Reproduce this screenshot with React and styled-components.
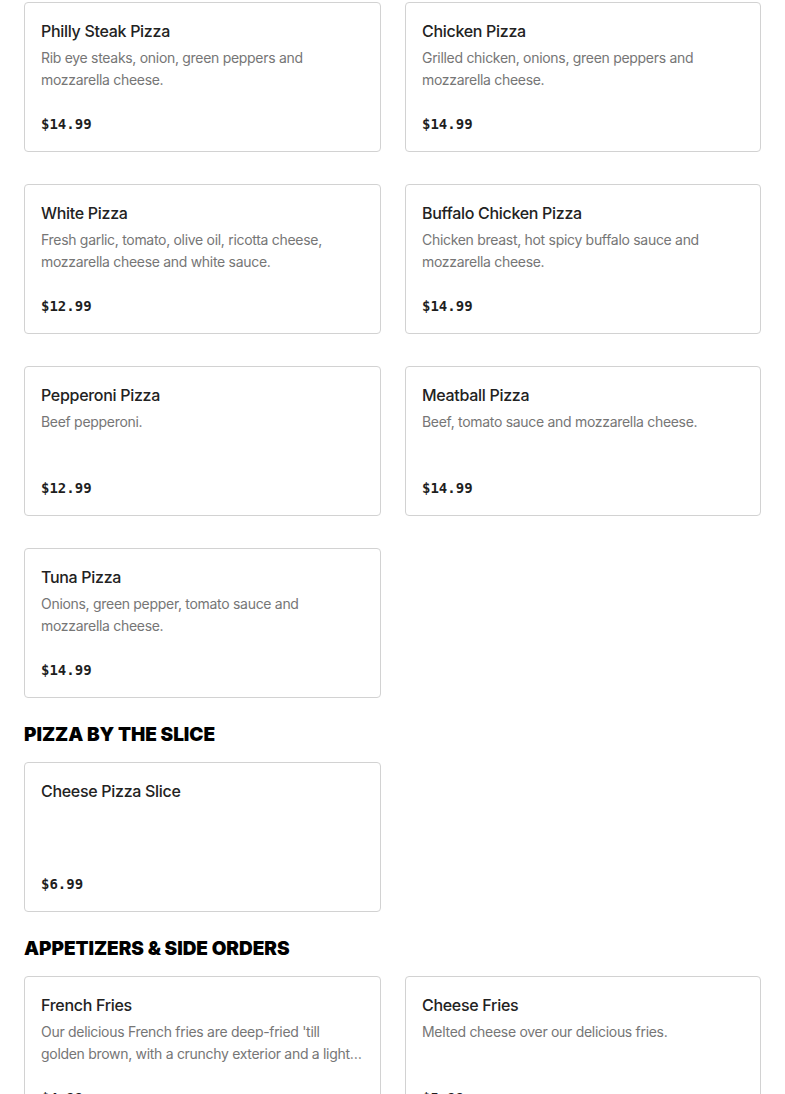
import styled, { createGlobalStyle } from "styled-components"

const Global = createGlobalStyle`
    body {
        margin: 0;
        background: #fff;
        font-family: Inter, "Noto Sans", sans-serif;
    }
`

const Page = styled.div`
    padding: 2px 24px 0 24px;
    display: flex;
    flex-direction: column;
`

const Grid = styled.div`
    display: grid;
    grid-template-columns: 357px 356px;
    column-gap: 24px;
    row-gap: 32px;
`

const Heading = styled.h2`
    margin: 25px 0 15px;
    font-family: Inter, "Liberation Sans", sans-serif;
    font-weight: 900;
    font-size: 19px;
    line-height: 24px;
    color: #000;
    letter-spacing: -0.05px;
`

const Card = styled.div`
    box-sizing: border-box;
    height: 150px;
    border: 1px solid #d2d2d2;
    border-radius: 4px;
    padding: 16px 16px 17px;
    display: flex;
    flex-direction: column;
    background: #fff;

    h3 {
        margin: 0;
        font-size: 16px;
        font-weight: 500;
        line-height: 24px;
        color: #222;
        letter-spacing: -0.3px;
    }

    p {
        margin: 4px 0 0;
        font-size: 14px;
        line-height: 22px;
        color: #767676;
        letter-spacing: -0.3px;
        display: -webkit-box;
        -webkit-line-clamp: 2;
        -webkit-box-orient: vertical;
        overflow: hidden;
    }
`

const Price = styled.div`
    margin-top: auto;
    font-family: "DejaVu Sans Mono", "Liberation Mono", monospace;
    font-weight: 700;
    font-size: 14px;
    line-height: 20px;
    color: #1e1e1e;
`

const pizzas = [
    { name: "Philly Steak Pizza", desc: "Rib eye steaks, onion, green peppers and mozzarella cheese.", price: "$14.99" },
    { name: "Chicken Pizza", desc: "Grilled chicken, onions, green peppers and mozzarella cheese.", price: "$14.99" },
    { name: "White Pizza", desc: "Fresh garlic, tomato, olive oil, ricotta cheese, mozzarella cheese and white sauce.", price: "$12.99" },
    { name: "Buffalo Chicken Pizza", desc: "Chicken breast, hot spicy buffalo sauce and mozzarella cheese.", price: "$14.99" },
    { name: "Pepperoni Pizza", desc: "Beef pepperoni.", price: "$12.99" },
    { name: "Meatball Pizza", desc: "Beef, tomato sauce and mozzarella cheese.", price: "$14.99" },
    { name: "Tuna Pizza", desc: "Onions, green pepper, tomato sauce and mozzarella cheese.", price: "$14.99" },
]

const slices = [
    { name: "Cheese Pizza Slice", desc: "", price: "$6.99" },
]

const sides = [
    { name: "French Fries", desc: "Our delicious French fries are deep-fried 'till golden brown, with a crunchy exterior and a light and fluffy interior.", price: "$4.99" },
    { name: "Cheese Fries", desc: "Melted cheese over our delicious fries.", price: "$5.99" },
]

function Item({ item }) {
    return (
        <Card>
            <h3>{item.name}</h3>
            {item.desc && <p>{item.desc}</p>}
            <Price>{item.price}</Price>
        </Card>
    )
}

export default function App() {
    return (
        <>
            <Global />
            <Page>
                <Grid>
                    {pizzas.map(p => <Item key={p.name} item={p} />)}
                </Grid>
                <Heading>PIZZA BY THE SLICE</Heading>
                <Grid>
                    {slices.map(p => <Item key={p.name} item={p} />)}
                </Grid>
                <Heading>APPETIZERS &amp; SIDE ORDERS</Heading>
                <Grid>
                    {sides.map(p => <Item key={p.name} item={p} />)}
                </Grid>
            </Page>
        </>
    )
}
